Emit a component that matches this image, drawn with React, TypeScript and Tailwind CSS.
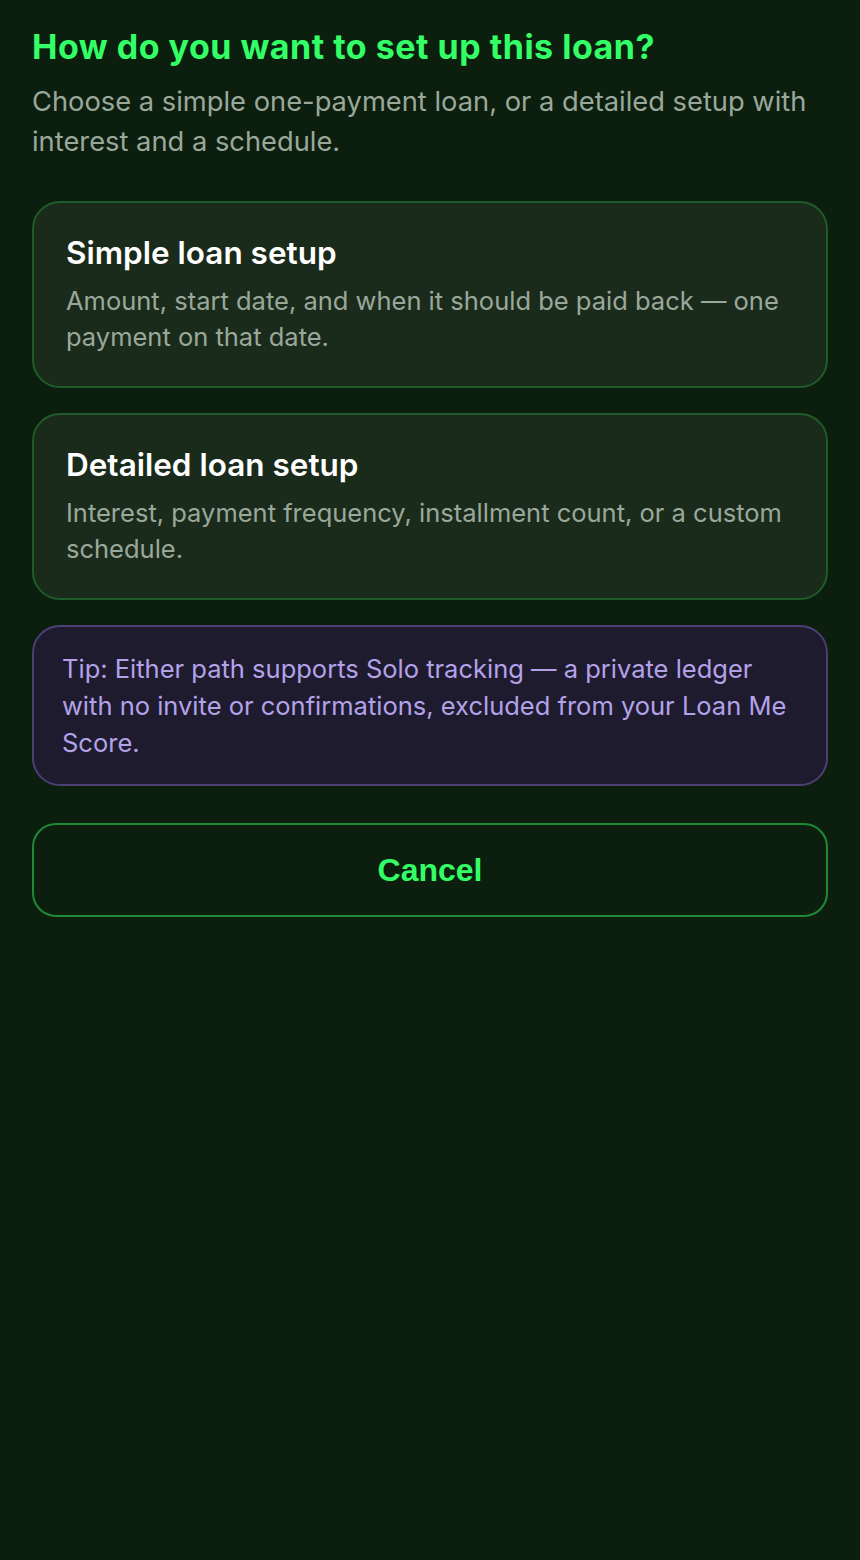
export default function App() {
  return (
    <div className="min-h-[1560px] bg-[#0c1e0e] px-8 pt-[27px] font-['Inter',sans-serif]">
      <h1 className="text-[34px] leading-[40px] font-bold tracking-[0.5px] text-[#33ff66]">
        How do you want to set up this loan?
      </h1>
      <p className="mt-[15px] text-[27.3px] leading-[40px] text-[#9aa89b]">
        Choose a simple one-payment loan, or a detailed setup with interest and
        a schedule.
      </p>

      <div className="mt-[39px] flex flex-col gap-[25px]">
        <button
          type="button"
          className="w-full rounded-[28px] border-2 border-[#1f5c29] bg-[#1b2b1b] px-[32px] pt-[32px] pb-[31px] text-left"
        >
          <div className="text-[31.5px] leading-[36px] font-semibold text-white">
            Simple loan setup
          </div>
          <div className="mt-[12px] text-[25.5px] leading-[36px] text-[#9aa89b]">
            Amount, start date, and when it should be paid back — one payment
            on that date.
          </div>
        </button>

        <button
          type="button"
          className="w-full rounded-[28px] border-2 border-[#1f5c29] bg-[#1b2b1b] px-[32px] pt-[32px] pb-[31px] text-left"
        >
          <div className="text-[31.5px] leading-[36px] font-semibold text-white">
            Detailed loan setup
          </div>
          <div className="mt-[12px] text-[25.5px] leading-[36px] text-[#9aa89b]">
            Interest, payment frequency, installment count, or a custom
            schedule.
          </div>
        </button>

        <div className="rounded-[28px] border-2 border-[#4b3f74] bg-[#1f1b2f] px-[28px] pt-[23px] pb-[23px] text-[25.5px] leading-[37px] text-[#b3a2e8]">
          Tip: Either path supports Solo tracking — a private ledger with no
          invite or confirmations, excluded from your Loan Me Score.
        </div>
      </div>

      <button
        type="button"
        className="mt-[37px] flex h-[94px] w-full items-center justify-center rounded-[24px] border-2 border-[#1f8a35] font-['Liberation_Sans',Arial,sans-serif] text-[32px] font-bold text-[#33ff66]"
      >
        Cancel
      </button>
    </div>
  );
}
